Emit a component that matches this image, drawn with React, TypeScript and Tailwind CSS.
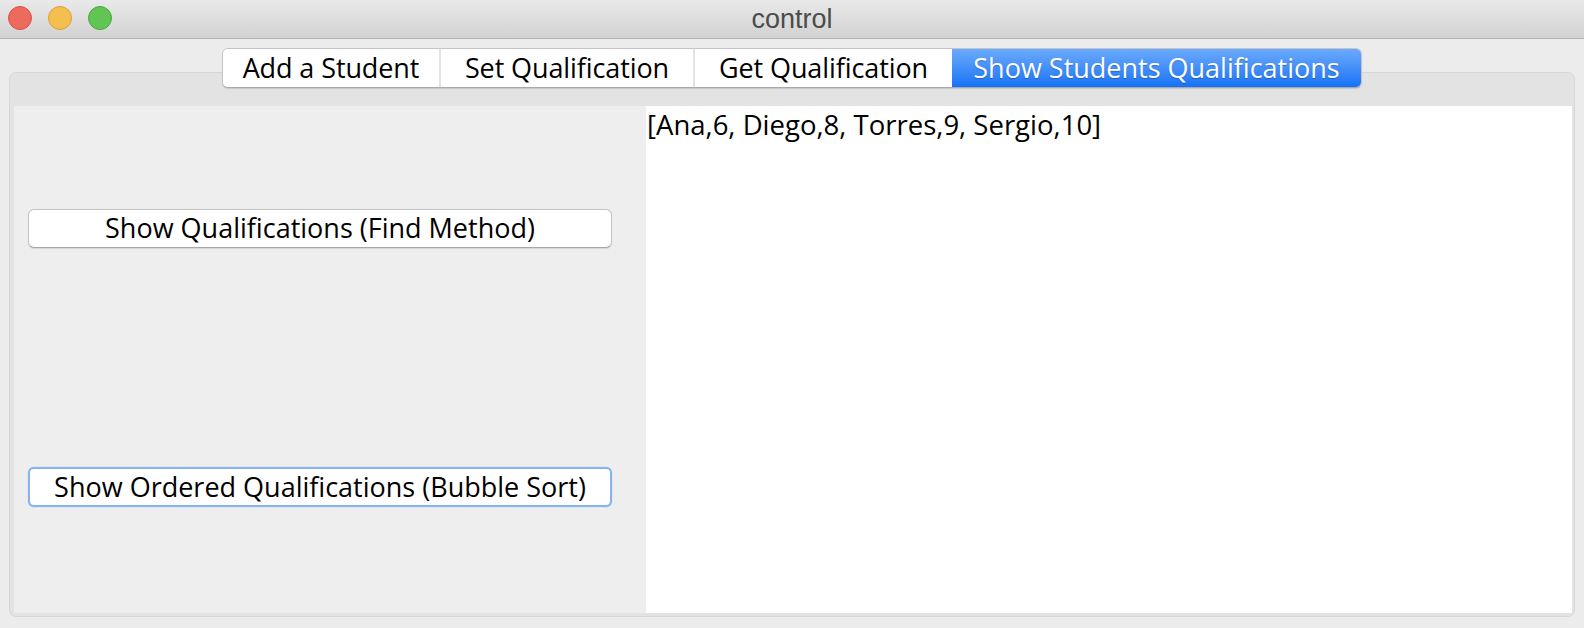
import React from "react";

const ui = { fontFamily: '"Open Sans", "DejaVu Sans", sans-serif' };

export default function App() {
  const tabs = [
    { label: "Add a Student", w: "w-[216px]" },
    { label: "Set Qualification", w: "w-[254px]" },
    { label: "Get Qualification", w: "w-[259px]" },
  ];
  return (
    <div className="w-[1584px] h-[628px] bg-[#ececec] flex flex-col overflow-hidden" style={ui}>
      {/* Title bar */}
      <div className="relative h-[39px] shrink-0 bg-gradient-to-b from-[#e9e9e9] to-[#d2d2d2] border-b border-[#b4b4b4] flex items-center justify-center">
        <div className="absolute left-[8px] top-[6px] flex gap-[16px]">
          <div className="w-[24px] h-[24px] rounded-full bg-[#ee6a5f] border border-[#d6544a]" />
          <div className="w-[24px] h-[24px] rounded-full bg-[#f5bf4f] border border-[#d9a13a]" />
          <div className="w-[24px] h-[24px] rounded-full bg-[#61c554] border border-[#4ca73f]" />
        </div>
        <span className="text-[27px] leading-none text-[#4b4b4b]" style={{ fontFamily: '"Liberation Sans", Arial, sans-serif' }}>
          control
        </span>
      </div>

      {/* Body */}
      <div className="flex flex-col px-[9px] pt-[9px] pb-[11px] flex-1">
        {/* Tabs */}
        <div className="relative z-10 flex justify-center">
          <div className="flex h-[40px] rounded-[6px] border border-[#c4c4c4] border-b-[#a9a9a9] shadow-[0_1px_1px_rgba(0,0,0,0.12)] bg-white overflow-hidden">
            {tabs.map((t, i) => (
              <div
                key={t.label}
                className={`${t.w} h-full flex items-center justify-center text-[27px] tracking-[-0.1px] text-black bg-white ${i > 0 ? "border-l-2 border-[#e4e4e4]" : ""}`}
              >
                {t.label}
              </div>
            ))}
            <div className="w-[409px] h-full flex items-center justify-center text-[27px] text-white bg-gradient-to-b from-[#6aaafc] to-[#1272f5] [text-shadow:0_1px_1px_rgba(0,0,0,0.25)]">
              Show Students Qualifications
            </div>
          </div>
        </div>

        {/* Panel */}
        <div className="-mt-[16px] flex-1 flex rounded-[7px] border border-[#d7d7d7] bg-[#e3e3e3] pt-[33px] pl-[4px] pr-[2px] pb-[3px]">
          <div className="w-[632px] shrink-0 bg-[#eeeeee] flex flex-col px-[14px] pt-[103px]">
            <div className="w-[584px] h-[39px] rounded-[6px] bg-white border border-[#c3c3c3] border-b-[#a8a8a8] shadow-[0_1px_1px_rgba(0,0,0,0.1)] flex items-center justify-center text-[27px] text-black">
              Show Qualifications (Find Method)
            </div>
            <div className="mt-[219px] w-[584px] h-[40px] rounded-[6px] bg-white border-2 border-[#86b4ee] shadow-[0_0_1px_rgba(40,110,220,0.5)] flex items-center justify-center text-[27px] text-black">
              Show Ordered Qualifications (Bubble Sort)
            </div>
          </div>
          <div className="flex-1 bg-white px-[1px]">
            <div className="text-[27.5px] leading-[38px] text-black">[Ana,6, Diego,8, Torres,9, Sergio,10]</div>
          </div>
        </div>
      </div>
    </div>
  );
}
